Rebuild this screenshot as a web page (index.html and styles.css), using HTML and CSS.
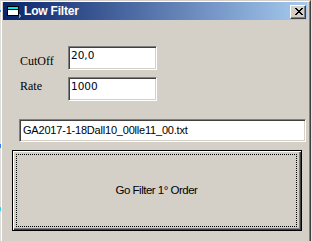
FILE: index.html
```html
<!DOCTYPE html>
<html>
<head>
<meta charset="utf-8">
<link rel="stylesheet" href="styles.css">
</head>
<body>
<div class="screen">
  <div class="desk"></div>
  <div class="win-outer">
    <div class="win">
      <div class="titlebar">
        <svg class="app-icon" width="16" height="16" viewBox="0 0 16 16" shape-rendering="crispEdges">
          <rect x="1.5" y="3.5" width="11" height="9" fill="#fff" stroke="#000"/>
          <rect x="2" y="4" width="10" height="2" fill="#00e8f0"/>
          <rect x="2" y="6" width="10" height="1" fill="#000"/>
          <polygon points="13,11 16,13 13,15" fill="#9a9a9a"/>
        </svg>
        <span class="title">Low Filter</span>
        <div class="close">
          <svg width="8" height="7" viewBox="0 0 8 7" shape-rendering="crispEdges">
            <path d="M0 0h2v1H0zM6 0h2v1H6zM1 1h2v1H1zM5 1h2v1H5zM2 2h4v1H2zM3 3h2v1H3zM2 4h4v1H2zM1 5h2v1H1zM5 5h2v1H5zM0 6h2v1H0zM6 6h2v1H6z" fill="#000"/>
          </svg>
        </div>
      </div>
      <div class="client">
        <div class="params">
          <div class="lbl lbl-cut">CutOff</div>
          <div class="field">20,0</div>
          <div class="lbl lbl-rate">Rate</div>
          <div class="field">1000</div>
        </div>
        <div class="file">GA2017-1-18Dall10_00lle11_00.txt</div>
        <div class="go"><div class="focus">Go Filter 1° Order</div></div>
      </div>
    </div>
  </div>
  <div class="edge"></div>
</div>
</body>
</html>
```

FILE: styles.css
```css
* { box-sizing: border-box; }
html, body {
  margin: 0;
  padding: 0;
  width: 312px;
  height: 241px;
  overflow: hidden;
  background: #d4d0c8;
}
.screen {
  display: flex;
  width: 312px;
  height: 241px;
}
.desk {
  width: 1px;
  flex: none;
  background: linear-gradient(to bottom,
    #dcdcdc 0, #dcdcdc 10px, #3c8ee8 10px, #3c8ee8 12px,
    #dcdcdc 12px, #dcdcdc 144px, #2a7ef0 144px, #2a7ef0 148px,
    #dcdcdc 148px, #dcdcdc 207px, #3ad0e0 207px, #3ad0e0 211px,
    #dcdcdc 211px);
}
.edge {
  width: 1px;
  flex: none;
  background: #e4e4e4;
}
.win-outer {
  width: 310px;
  flex: none;
  border-top: 1px solid #d4d0c8;
  border-right: 1px solid #404040;
}
.win {
  height: 100%;
  border-top: 1px solid #fff;
  border-left: 1px solid #fff;
  border-right: 1px solid #808080;
  padding: 0 2px 0 1px;
  background: #d4d0c8;
}
.titlebar {
  height: 18px;
  display: flex;
  align-items: center;
  background: linear-gradient(to right, #0a246a, #a6caf0);
}
.app-icon {
  margin-left: 3px;
  flex: none;
}
.title {
  margin-left: 2px;
  color: #fff;
  font: bold 12px "Liberation Sans", Arial, sans-serif;
  letter-spacing: -0.2px;
  flex: 1;
}
.close {
  width: 16px;
  height: 14px;
  margin-right: 1px;
  margin-top: 1px;
  background: #d4d0c8;
  border: 1px solid;
  border-color: #fff #404040 #404040 #fff;
  box-shadow: inset -1px -1px #808080;
  display: flex;
  align-items: center;
  justify-content: center;
  padding: 0 0 1px 1px;
}
.close svg { display: block; }
.client {
  display: flex;
  flex-direction: column;
  align-items: flex-start;
}
.params {
  margin-top: 26px;
  margin-left: 17px;
  display: grid;
  grid-template-columns: 48px 89px;
  grid-auto-rows: 24px;
  row-gap: 7px;
}
.lbl {
  font: 12px/14px "Liberation Serif", "Times New Roman", serif;
  color: #000;
}
.lbl-cut { margin-top: 8px; }
.lbl-rate { margin-top: 2px; }
.field {
  background: #fff;
  border: 1px solid;
  border-color: #808080 #fff #fff #808080;
  box-shadow: inset 1px 1px #404040, inset -1px -1px #d4d0c8;
  padding: 2px 2px 0 2px;
  font: 10.5px/13px "DejaVu Sans", Tahoma, sans-serif;
  color: #000018;
}
.file {
  margin-top: 18px;
  margin-left: 16px;
  width: 287px;
  height: 23px;
  background: #fff;
  border: 1px solid;
  border-color: #808080 #fff #fff #808080;
  box-shadow: inset 1px 1px #404040, inset -1px -1px #d4d0c8;
  padding: 3px 2px 0 3px;
  font: 11px/14px "Liberation Sans", Arial, sans-serif;
  letter-spacing: -0.2px;
  color: #000;
}
.go {
  margin-top: 8px;
  margin-left: 9px;
  width: 290px;
  height: 81px;
  border: 1px solid #000;
  box-shadow: inset 1px 1px #fff, inset -1px -1px #404040, inset -2px -2px #808080;
  padding: 3px 4px 3px 3px;
  display: flex;
}
.focus {
  flex: 1;
  border: 1px dotted #000;
  display: flex;
  align-items: center;
  justify-content: center;
  font: 11.5px/13px "Liberation Sans", Arial, sans-serif;
  letter-spacing: -0.5px;
  color: #000;
}
```
